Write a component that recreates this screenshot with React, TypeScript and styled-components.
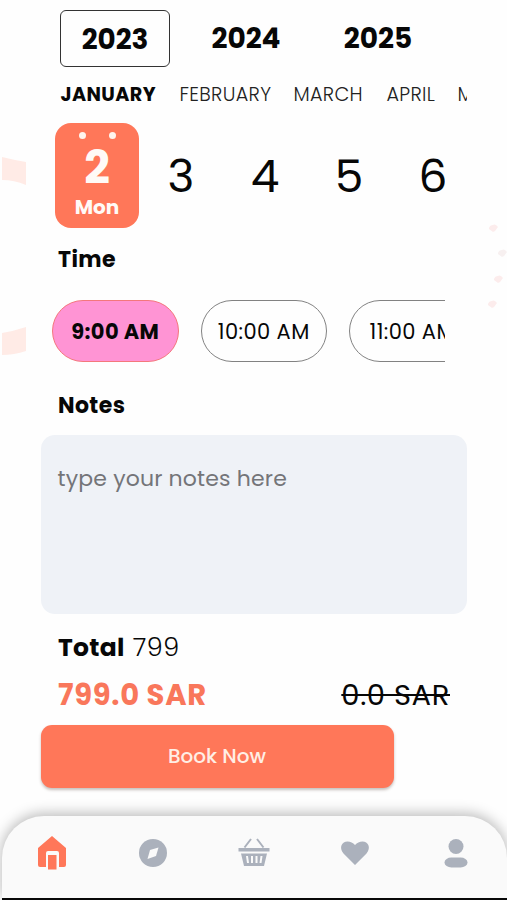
import React from "react";
import styled, { createGlobalStyle } from "styled-components";

const GlobalStyle = createGlobalStyle`
  * { box-sizing: border-box; }
  body { margin: 0; background: #fefefe; font-family: "Poppins", "Inter", sans-serif; color: #070707; }
`;

const CORAL = "#ff7759";
const GREY = "#abb1bc";

const Screen = styled.main`
  position: relative;
  width: 507px;
  height: 900px;
  overflow: hidden;
  display: flex;
  flex-direction: column;
  background: #fefefe;
`;

const Decoration = styled.svg`
  position: absolute;
  inset: 0;
  pointer-events: none;
`;

const Label = styled.span<{ $size: number; $weight?: number; $track?: number; $color?: string; $leading?: number }>`
  display: block;
  flex: none;
  white-space: nowrap;
  font-size: ${(p) => p.$size}px;
  font-weight: ${(p) => p.$weight ?? 400};
  letter-spacing: ${(p) => p.$track ?? 0}px;
  color: ${(p) => p.$color ?? "inherit"};
  line-height: ${(p) => p.$leading ?? 1.2};
`;

const Years = styled.div`
  display: flex;
  margin: 10px 40px 0 60px;
  height: 57px;
`;

const Year = styled.div<{ $selected?: boolean }>`
  display: flex;
  align-items: center;
  justify-content: center;
  width: ${(p) => (p.$selected ? 110 : 132)}px;
  height: ${(p) => (p.$selected ? 57 : 56)}px;
  margin-right: ${(p) => (p.$selected ? 10 : 0)}px;
  padding-top: ${(p) => (p.$selected ? 2 : 1)}px;
  border: ${(p) => (p.$selected ? "1.5px solid #333" : "0")};
  border-radius: 6px;
`;

const Months = styled.div`
  display: flex;
  align-items: center;
  height: 55px;
  margin: 0 40px 0 60px;
  overflow: hidden;
`;

const Month = styled.div<{ $width: number }>`
  flex: none;
  width: ${(p) => p.$width}px;
  padding-left: 0.5px;
`;

const Dates = styled.div`
  display: flex;
  align-items: center;
  height: 106px;
  margin: 0 62px 0 55px;
  overflow: hidden;
`;

const DateCard = styled.div`
  flex: none;
  display: flex;
  flex-direction: column;
  align-items: center;
  width: 84px;
  height: 105px;
  padding-top: 9px;
  border-radius: 16px;
  background: ${CORAL};
  color: #fffaf7;
`;

const Rings = styled.div`
  display: flex;
  gap: 23px;
  height: 7px;
  margin-bottom: 8px;
`;

const Ring = styled.i`
  width: 7px;
  height: 7px;
  border-radius: 50%;
  background: #fff5ee;
`;

const DateCell = styled.div`
  flex: none;
  display: flex;
  justify-content: center;
  width: 84px;
  padding-top: 2px;
`;

const Heading = styled.div<{ $height: number }>`
  display: flex;
  align-items: center;
  height: ${(p) => p.$height}px;
  padding: 2px 0 0 58px;
`;

const Times = styled.div`
  display: flex;
  gap: 22px;
  margin: 10px 62px 13px 52px;
  overflow: hidden;
`;

const TimeChip = styled.div<{ $selected?: boolean }>`
  flex: none;
  display: flex;
  align-items: center;
  justify-content: center;
  width: 126.5px;
  height: 62px;
  padding-top: 2px;
  border: 1.5px solid ${(p) => (p.$selected ? "#f4777c" : "#828282")};
  border-radius: 31px;
  background: ${(p) => (p.$selected ? "#ff94d4" : "transparent")};
`;

const Notes = styled.div`
  height: 179px;
  margin: 0 40px 0 41px;
  padding: 31px 16.5px;
  border-radius: 14px;
  background: #eff2f7;
`;

const Total = styled.div`
  display: flex;
  align-items: center;
  gap: 8px;
  height: 67px;
  padding-left: 58px;
`;

const Prices = styled.div`
  display: flex;
  align-items: center;
  justify-content: space-between;
  height: 28px;
  padding: 1px 57px 0 58px;
`;

const Strike = styled.del`
  text-decoration: line-through;
  text-decoration-thickness: 2px;
`;

const BookButton = styled.button`
  display: flex;
  align-items: center;
  justify-content: center;
  width: 353px;
  height: 63px;
  margin: 16px 0 0 41px;
  padding: 0 1px 2px 0;
  border: 0;
  border-radius: 11px;
  background: ${CORAL};
  font-family: inherit;
  box-shadow: 0 2px 3px rgba(80, 60, 50, 0.32);
`;

const NavBar = styled.nav`
  display: grid;
  grid-template-columns: repeat(5, 101px);
  align-items: center;
  height: 82px;
  margin: 28px 0 0 2px;
  padding-bottom: 9px;
  border-radius: 42px 42px 0 0;
  background: #fafafa;
  box-shadow: 0 -2px 13px 1px rgba(0, 0, 0, 0.26);
`;

const NavItem = styled.svg`
  width: 36px;
  height: 36px;
  justify-self: center;
  margin-right: 2px;
`;

const SystemBar = styled.div`
  position: relative;
  height: 2px;
  margin-left: 2px;
  background: #080808;
`;

const hearts = [
  [493, 228],
  [502, 253],
  [498, 279],
  [492, 304],
];

export default function App() {
  return (
    <Screen>
      <GlobalStyle />
      <Decoration width="507" height="900" viewBox="0 0 507 900">
        <path d="M2 157Q14 160 26 162V185Q14 180 2 180Z" fill="#ffebe6" />
        <path d="M2 333Q14 331 26 327V351Q14 355 2 355Z" fill="#ffebe6" />
        {hearts.map(([x, y], i) => (
          <path key={y} d={`M${x - 4} ${y}q1-3 4-3q1-1 3 0l2 2-3 4-2 1-4-3Z`} fill={i === 1 ? "#f7f0f0" : "#fcecec"} />
        ))}
      </Decoration>

      <Years>
        <Year $selected><Label $size={27.8} $weight={700}>2023</Label></Year>
        <Year><Label $size={28} $weight={700}>2024</Label></Year>
        <Year><Label $size={28} $weight={700}>2025</Label></Year>
      </Years>

      <Months>
        <Month $width={119}><Label $size={19.2} $weight={700} $track={0.4}>JANUARY</Label></Month>
        <Month $width={114}><Label $size={19.2} $weight={300} $track={0.35} $color="#222">FEBRUARY</Label></Month>
        <Month $width={93}><Label $size={19.2} $weight={300} $track={0.35} $color="#222">MARCH</Label></Month>
        <Month $width={71}><Label $size={19.2} $weight={300} $track={0.3} $color="#222">APRIL</Label></Month>
        <Month $width={60}><Label $size={19.2} $weight={300} $color="#222">MAY</Label></Month>
      </Months>

      <Dates>
        <DateCard>
          <Rings><Ring /><Ring /></Rings>
          <Label $size={45} $weight={700} $leading={0.94}>2</Label>
          <Label $size={20} $weight={700} $leading={1.85}>Mon</Label>
        </DateCard>
        {["3", "4", "5", "6"].map((d) => (
          <DateCell key={d}><Label $size={45.5} $weight={400}>{d}</Label></DateCell>
        ))}
      </Dates>

      <Heading $height={62}><Label $size={22} $weight={700} $track={0.4}>Time</Label></Heading>
      <Times>
        <TimeChip $selected><Label $size={21} $weight={700} $track={0.35}>9:00 AM</Label></TimeChip>
        <TimeChip><Label $size={21} $weight={400} $track={0.4}>10:00 AM</Label></TimeChip>
        <TimeChip><Label $size={21} $weight={400} $track={0.4}>11:00 AM</Label></TimeChip>
      </Times>

      <Heading $height={60}><Label $size={22} $weight={700} $track={0.4}>Notes</Label></Heading>
      <Notes><Label $size={22} $track={0.17} $color="#747579">type your notes here</Label></Notes>

      <Total>
        <Label $size={25} $weight={700} $track={0.3}>Total</Label>
        <Label $size={25.5} $weight={300} $track={0.5}>799</Label>
      </Total>
      <Prices>
        <Label $size={29} $weight={700} $track={0.7} $color="#f9775b">799.0 SAR</Label>
        <Strike><Label $size={29} $weight={400} $track={0.6}>0.0 SAR</Label></Strike>
      </Prices>
      <BookButton><Label $size={20} $weight={500} $color="#ffeee5">Book Now</Label></BookButton>

      <NavBar>
        <NavItem viewBox="0 0 36 36" fill={CORAL}>
          <path d="M18 1 32 13V30Q32 32 30 32H25V18Q25 16 23 16H14Q12 16 12 18V32H6Q4 32 4 30V13Z" />
          <path d="M14 20H22.5V34.5H14Z" />
        </NavItem>
        <NavItem viewBox="0 0 36 36">
          <circle cx="18" cy="18" r="14" fill={GREY} />
          <path d="M23.5 12.5 21 21 12.5 24 15 15Z" fill="#fafafa" />
        </NavItem>
        <NavItem viewBox="0 0 36 36" fill={GREY}>
          <path d="M8.500 12.500 15 4M27.500 12.500 21 4" stroke={GREY} strokeWidth="2" fill="none" />
          <path d="M2.500 13H33.500V16.500H2.500Z" />
          <path fillRule="evenodd" d="M5 18.5H31L28 31H8ZM10 21L11 28H13L12 21ZM15 21V28H17V21ZM19.5 21V28H21.5V21ZM24.5 21L23.5 28H25.5L26.5 21Z" />
        </NavItem>
        <NavItem viewBox="0 0 36 36" fill={GREY}>
          <path d="M18 30 6.500 18.500C1.500 12.500 5 6.500 10.500 6.500Q15 6.500 18 10Q21 6.500 25.500 6.500C31 6.500 34.500 12.500 29.500 18.500Z" />
        </NavItem>
        <NavItem viewBox="0 0 36 36" fill={GREY}>
          <circle cx="18" cy="11.500" r="7.500" />
          <rect x="6.500" y="22.500" width="23" height="10" rx="7" ry="5" />
        </NavItem>
      </NavBar>
      <SystemBar />
    </Screen>
  );
}
